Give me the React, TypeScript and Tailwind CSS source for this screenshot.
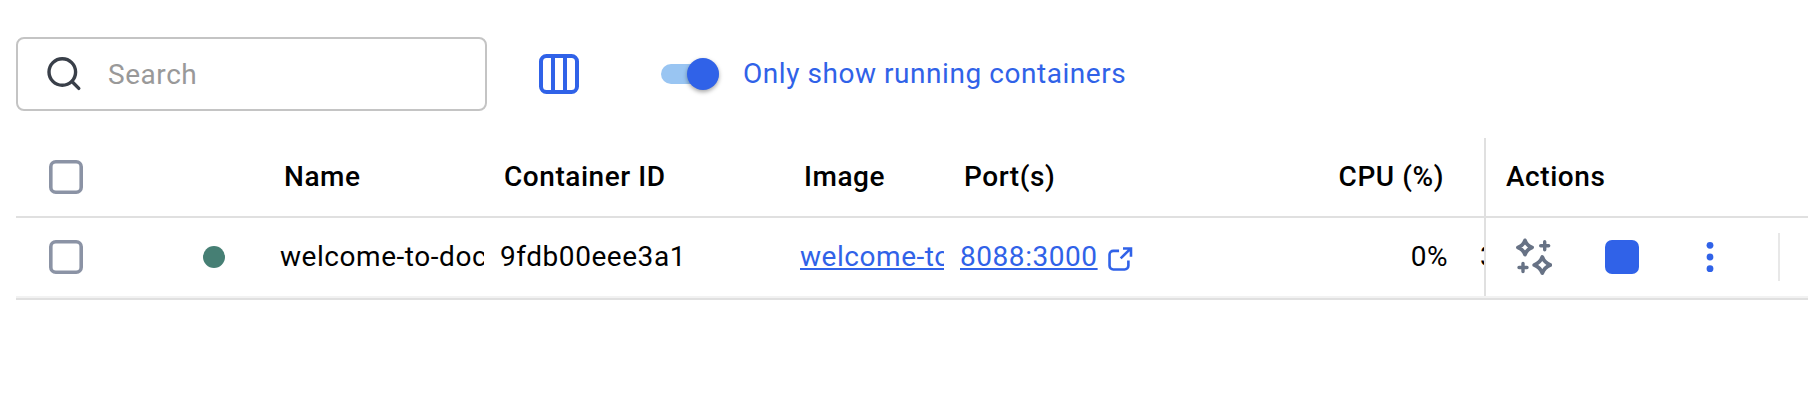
import React from "react";

const GRID =
  "grid grid-cols-[171px_61px_204px_284px_144px_288px_184px_1fr] gap-x-[16px] overflow-hidden";

function Checkbox({ label }: { label: string }) {
  return (
    <button type="button" role="checkbox" aria-checked="false" aria-label={label} className="block">
      <svg width="34" height="34" viewBox="0 0 34 34" fill="none" stroke="#8b93a5" strokeWidth="3.6">
        <rect x="1.8" y="1.8" width="30.4" height="30.4" rx="5" />
      </svg>
    </button>
  );
}

function SearchIcon() {
  return (
    <svg width="40" height="40" viewBox="0 0 40 40" fill="none" stroke="#393f49" strokeWidth="3.4" strokeLinecap="round">
      <circle cx="17.3" cy="18" r="13.3" />
      <path d="M27.2 27.8 L33.8 34.4" />
    </svg>
  );
}

function ColumnsIcon() {
  return (
    <svg width="40" height="40" viewBox="0 0 40 40" fill="none" stroke="#3062e8" strokeWidth="4">
      <rect x="2" y="2" width="36" height="36" rx="5.5" />
      <path d="M14 3V37M26 3V37" />
    </svg>
  );
}

function ExternalIcon() {
  return (
    <svg width="25" height="25" viewBox="0 0 26 26" fill="none" stroke="#3062e8" strokeWidth="2.7">
      <path d="M11.5 4H5.5A3.9 3.9 0 0 0 1.6 7.9V19.5A3.9 3.9 0 0 0 5.5 23.4H17.3A3.9 3.9 0 0 0 21.2 19.5V14" />
      <path d="M13.2 11.8L23.5 1.7M15.6 1.6H23.9V10.2" />
    </svg>
  );
}

function SparklesIcon() {
  return (
    <svg width="38" height="38" viewBox="0 0 38 38" fill="none" stroke="#677285" strokeWidth="3.7" strokeLinejoin="round" strokeLinecap="round">
      <path d="M11 2.3Q12.9 7.5 18.1 9.4Q12.9 11.3 11 16.5Q9.1 11.3 3.9 9.4Q9.1 7.5 11 2.3Z" />
      <path d="M28.3 18.9Q30.5 24.8 36.4 27Q30.5 29.2 28.3 35.1Q26.1 29.2 20.2 27Q26.1 24.8 28.3 18.9Z" />
      <path d="M30.7 3.8V11.8M26.7 7.8H34.7M9 25.5V33.5M5 29.5H13" strokeWidth="3.4" />
    </svg>
  );
}

function MoreIcon() {
  return (
    <svg width="8" height="32" viewBox="0 0 8 32" fill="#3062e8">
      <circle cx="4" cy="4.3" r="3.4" />
      <circle cx="4" cy="16" r="3.4" />
      <circle cx="4" cy="27.7" r="3.4" />
    </svg>
  );
}

export default function App() {
  return (
    <main className="flex h-[402px] w-full flex-col overflow-hidden bg-white pl-[16px] pt-[37px] font-['Roboto',sans-serif] text-[28px] leading-[40px] tracking-[0.55px] text-black">
      <div className="flex h-[74px] items-center">
        <div className="flex h-[74px] w-[471px] items-center rounded-[8px] border-2 border-[#c4c4c4] pl-[27px]">
          <SearchIcon />
          <span className="ml-[23px] pt-[2px] text-[#999999]">Search</span>
        </div>
        <button type="button" aria-label="Columns" className="ml-[52px]">
          <ColumnsIcon />
        </button>
        <div className="ml-[82px] flex items-center">
          <div className="flex h-[20px] w-[58px] items-center justify-end rounded-full bg-[#99c5f2]">
            <div className="size-[32px] shrink-0 rounded-full bg-[#3062e8] shadow-[0_2px_4px_rgba(0,0,0,0.35)]" />
          </div>
          <span className="ml-[24px] whitespace-nowrap text-[#3062e8]">Only show running containers</span>
        </div>
      </div>

      <div className="mt-[27px] flex">
        <div className="w-[1468px] shrink-0">
          <div className={`${GRID} h-[80px] items-center whitespace-nowrap border-b-2 border-[#e0e0e0] font-medium`}>
            <div className="pl-[33px]">
              <Checkbox label="Select all" />
            </div>
            <span />
            <span className="pl-[4px]">Name</span>
            <span className="pl-[4px]">Container ID</span>
            <span className="pl-[4px]">Image</span>
            <span className="pl-[4px]">Port(s)</span>
            <span className="pr-[4px] text-right">CPU (%)</span>
          </div>
          <div className={`${GRID} h-[78px] items-center whitespace-nowrap`}>
            <div className="pl-[33px]">
              <Checkbox label="Select container" />
            </div>
            <span className="size-[22px] rounded-full bg-[#467f74]" />
            <span className="overflow-hidden">welcome-to-docker</span>
            <span className="overflow-hidden">9fdb00eee3a1</span>
            <a className="overflow-hidden text-[#3062e8] underline decoration-2 underline-offset-2">welcome-to-docker</a>
            <div className="flex items-center text-[#3062e8]">
              <a className="underline decoration-2 underline-offset-2">8088:3000</a>
              <span className="ml-[10px] mt-[4px]">
                <ExternalIcon />
              </span>
            </div>
            <span className="text-right">0%</span>
            <span className="pl-[16px]">3</span>
          </div>
        </div>
        <div className="min-w-0 flex-1 border-l-2 border-[#e0e0e0]">
          <div className="flex h-[80px] items-center border-b-2 border-[#e0e0e0] pl-[20px] font-medium">Actions</div>
          <div className="flex h-[78px] items-center pl-[28px]">
            <SparklesIcon />
            <button type="button" aria-label="Stop" className="ml-[53px] size-[34px] rounded-[7px] bg-[#3062e8]" />
            <button type="button" aria-label="More" className="ml-[67px]">
              <MoreIcon />
            </button>
            <span className="ml-[64px] h-[48px] w-[2px] bg-[#e8e8e8]" />
          </div>
        </div>
      </div>
      <div className="h-[4px] shrink-0 border-b-2 border-[#e0e0e0] bg-[#f2f2f2]" />
    </main>
  );
}
